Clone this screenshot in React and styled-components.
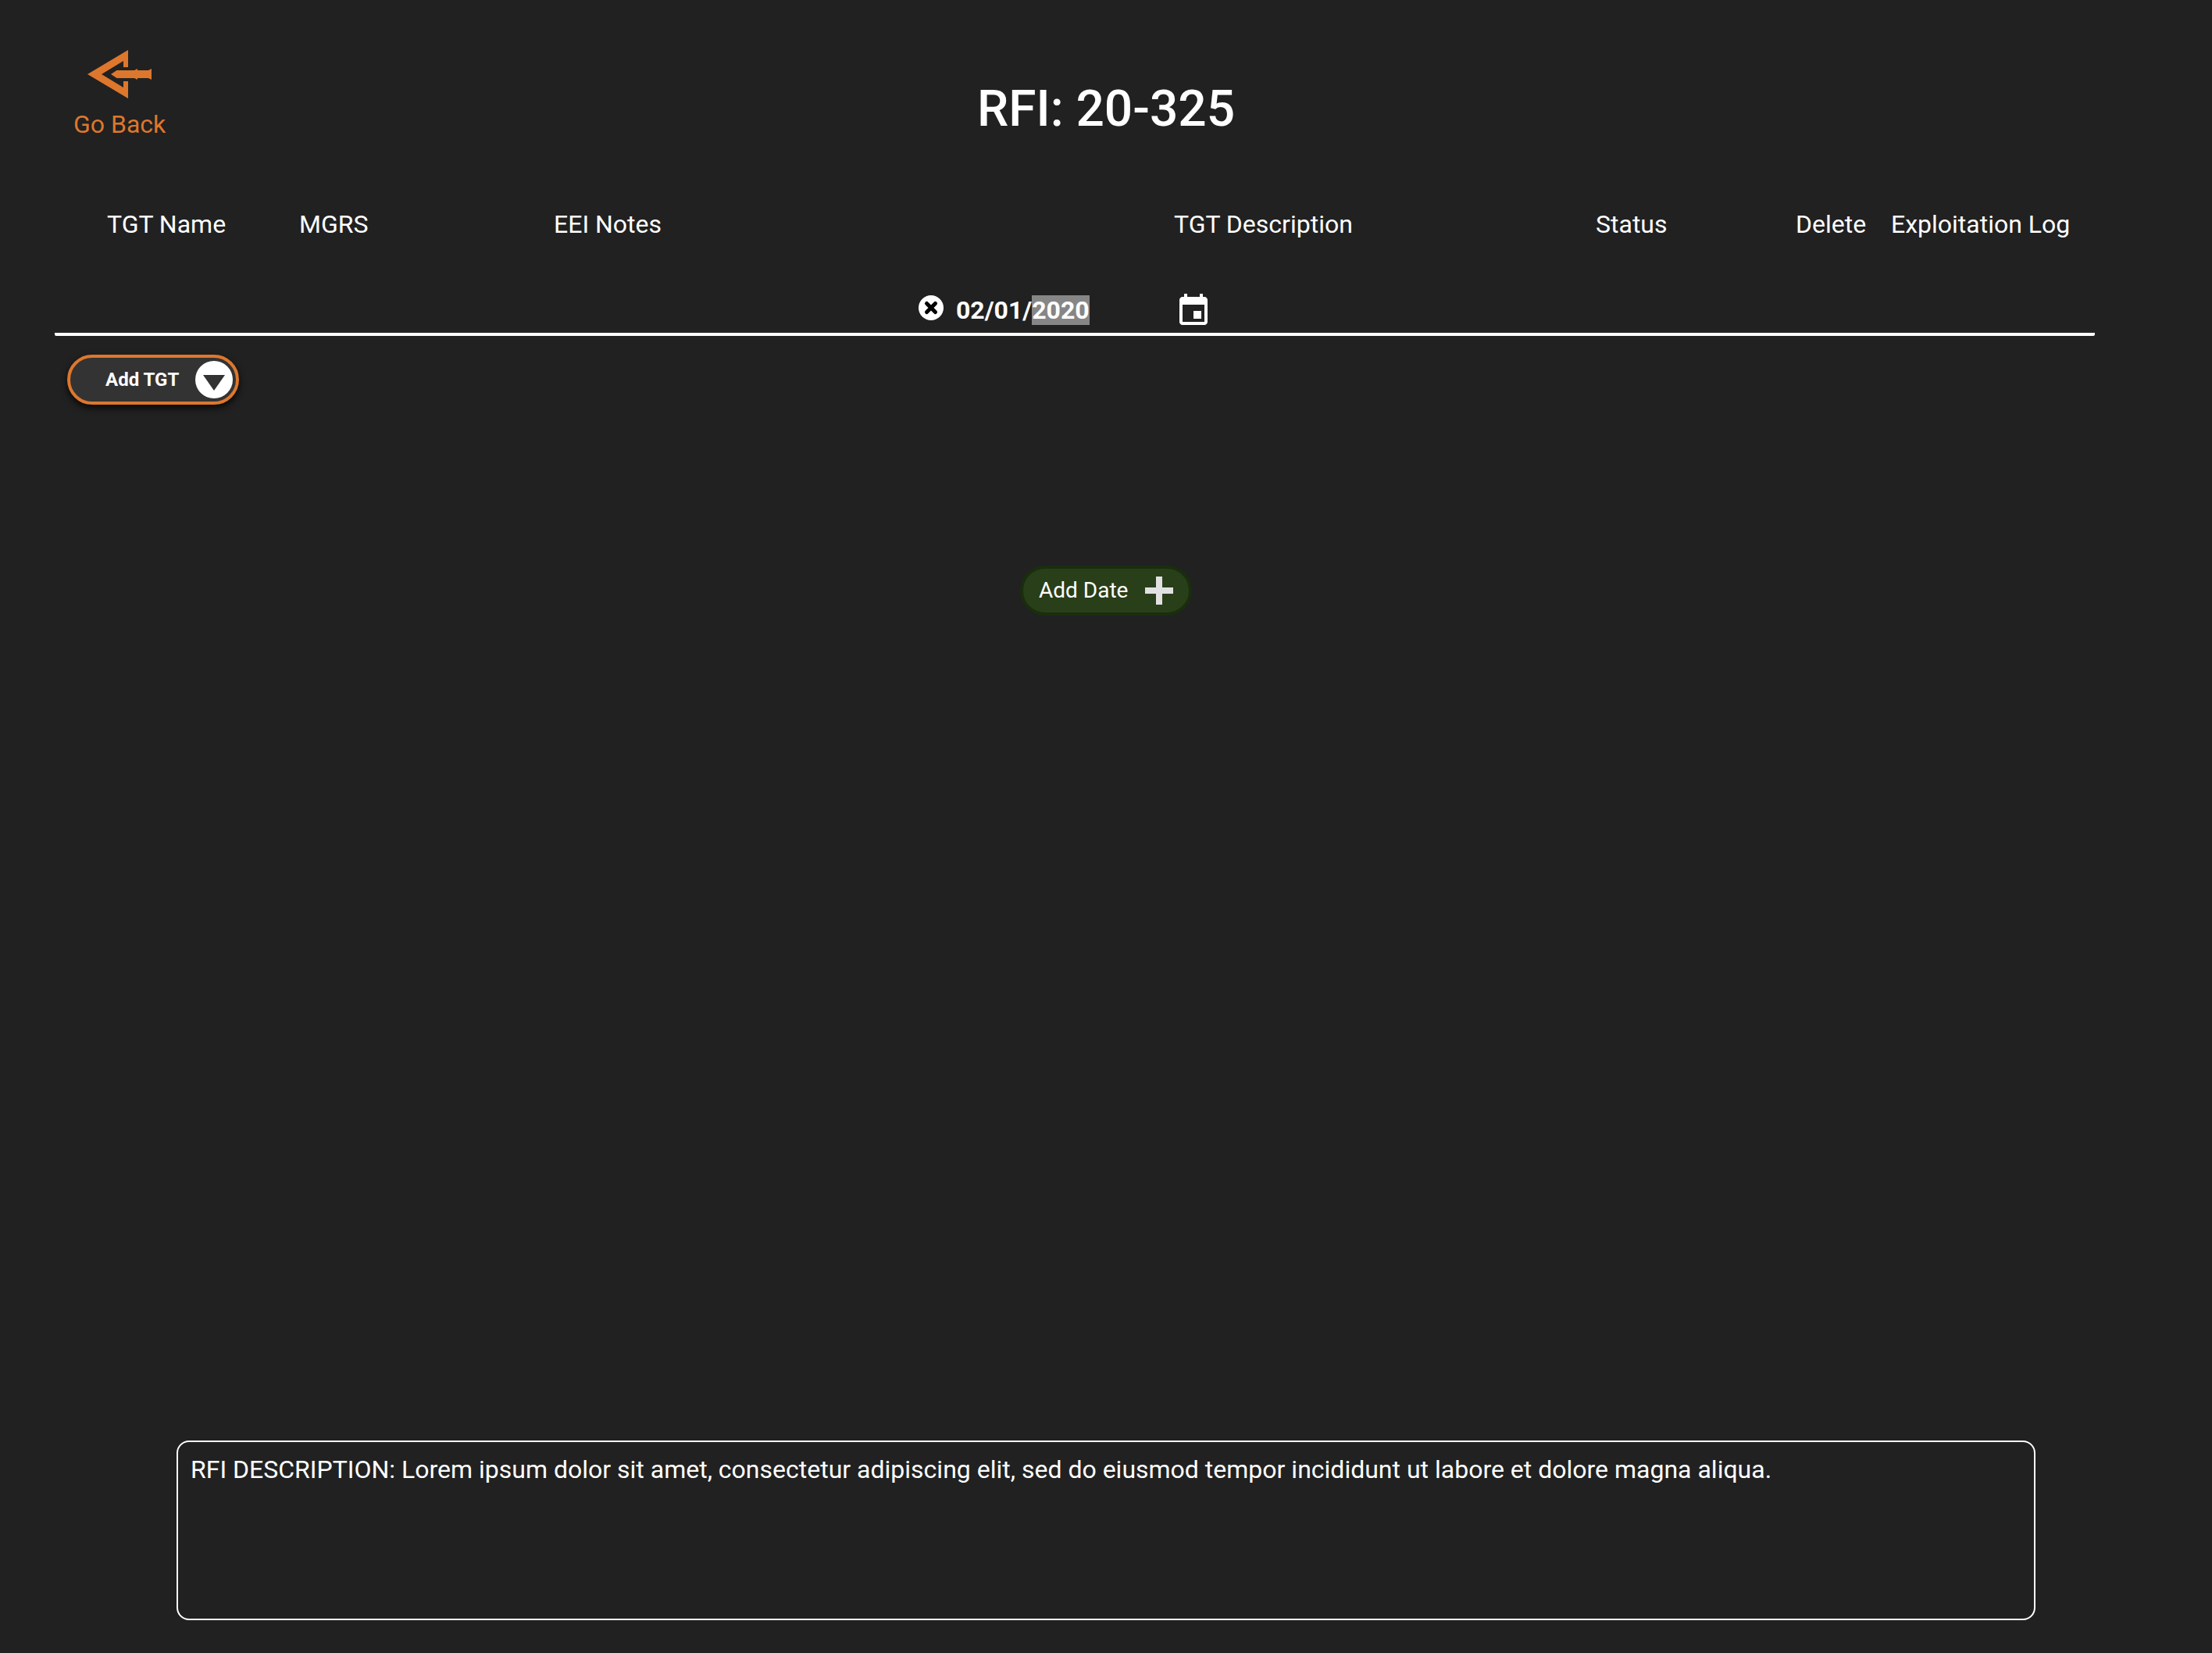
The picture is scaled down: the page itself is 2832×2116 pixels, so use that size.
import React, { useEffect, useRef } from "react";
import styled, { createGlobalStyle } from "styled-components";

const GlobalStyle = createGlobalStyle`
  * { box-sizing: border-box; }
  body {
    margin: 0;
    background: #212121;
    color: #fff;
    font-family: Roboto, "Liberation Sans", sans-serif;
    font-size: 32px;
    line-height: 38px;
  }
  button { font-family: inherit; cursor: pointer; }
`;

const Page = styled.main`
  min-height: 100vh;
  display: flex;
  flex-direction: column;
`;

const Header = styled.header`
  display: grid;
  grid-template-columns: 1fr auto 1fr;
  align-items: end;
  padding: 64px 94px 0;
`;

const BackLink = styled.a`
  justify-self: start;
  display: flex;
  flex-direction: column;
  align-items: center;
  gap: 14px;
  color: #dd772d;
  text-decoration: none;
`;

const Title = styled.h1`
  margin: 0;
  font-size: 64px;
  line-height: 76px;
  font-weight: 500;
`;

const Targets = styled.section`
  margin: 90px 150px 0 70px;
`;

const HeadTable = styled.table`
  display: block;
  width: 100%;
  padding-left: 67px;
`;

const HeadGroup = styled.thead`
  display: block;
`;

const HeadRow = styled.tr`
  display: grid;
  grid-template-columns: 246fr 326fr 794fr 540fr 256fr 122fr 261fr;
`;

const HeadCell = styled.th`
  padding: 0;
  font-weight: 400;
  text-align: left;
  white-space: nowrap;
`;

const DateRow = styled.div`
  display: flex;
  justify-content: center;
  align-items: flex-end;
  padding: 68px 24px 4px 0;
  border-bottom: 4px solid #fff;
  border-radius: 2px;
`;

const DateGroup = styled.div`
  display: flex;
  align-items: flex-start;
  gap: 16px;
  padding-bottom: 6px;
`;

const IconButton = styled.button`
  display: flex;
  padding: 0;
  border: 0;
  background: none;
  color: #fff;
`;

const DateField = styled.input`
  width: 280px;
  height: 38px;
  margin: 0;
  padding: 0;
  border: 0;
  outline: 0;
  background: none;
  color: #fff;
  font: 700 32px/38px Roboto, "Liberation Sans", sans-serif;
  caret-color: transparent;
  &::selection { background: #868686; color: #fff; }
`;

const Pill = styled.button`
  display: flex;
  align-items: center;
  justify-content: space-between;
  width: 220px;
  height: 64px;
  border-radius: 32px;
  color: #fff;
`;

const AddTarget = styled(Pill)`
  margin: 24px 0 0 16px;
  padding: 0 4px 0 45px;
  border: 4px solid #dd772d;
  background: #333;
  box-shadow: 0 4px 10px rgba(0, 0, 0, 0.8);
  font-size: 24px;
  line-height: 28px;
  font-weight: 700;
`;

const AddDate = styled(Pill)`
  align-self: center;
  margin-top: 206px;
  padding: 0 20px;
  border: 4px solid #1a2e0d;
  background: #293f1a;
  font-size: 28px;
  line-height: 32px;
`;

const Description = styled.section`
  min-height: 230px;
  margin: auto 226px 42px;
  padding: 16px;
  border: 2px solid #fff;
  border-radius: 16px;
`;

const DescriptionText = styled.p`
  margin: 0;
`;

const columns = [
  "TGT Name",
  "MGRS",
  "EEI Notes",
  "TGT Description",
  "Status",
  "Delete",
  "Exploitation Log",
];

function BackArrow() {
  return (
    <svg width="82" height="62" viewBox="0 0 82 62" fill="currentColor" aria-hidden="true">
      <path d="M0 31 52 0V22H46V14L18 31 46 48V40H52V62Z" />
      <path d="M30 31 37.500 26H60L64 24V26H78L82 24V38L78 36H64V38L60 36H37.500Z" />
    </svg>
  );
}

function ClearIcon() {
  return (
    <svg width="32" height="32" viewBox="0 0 32 32" aria-hidden="true">
      <circle cx="16" cy="16" r="16" fill="#fff" />
      <path d="M10.500 10.500 21.500 21.500M21.500 10.500 10.500 21.500" stroke="#000" strokeWidth="5" strokeLinecap="round" />
    </svg>
  );
}

function CalendarIcon() {
  return (
    <svg width="48" height="48" viewBox="0 0 24 24" fill="currentColor" aria-hidden="true">
      <path d="M17 12h-5v5h5v-5zM16 1v2H8V1H6v2H5c-1.110 0-1.990.9-1.990 2L3 19c0 1.100.89 2 2 2h14c1.100 0 2-.9 2-2V5c0-1.100-.9-2-2-2h-1V1h-2zm3 18H5V8h14v11z" />
    </svg>
  );
}

function DropIcon() {
  return (
    <svg width="48" height="48" viewBox="0 0 48 48" aria-hidden="true">
      <circle cx="24" cy="24" r="24" fill="#fff" />
      <path d="M10 18H38L24 38Z" fill="#333" />
    </svg>
  );
}

function PlusIcon() {
  return (
    <svg width="36" height="36" viewBox="0 0 36 36" aria-hidden="true">
      <path d="M14 0H22V14H36V22H22V36H14V22H0V14H14Z" fill="#e1e1e1" />
    </svg>
  );
}

export default function App() {
  const dateRef = useRef(null);

  // Open with the year part selected, ready to be typed over.
  useEffect(() => {
    dateRef.current.focus({ preventScroll: true });
    dateRef.current.setSelectionRange(6, 10);
  }, []);

  return (
    <Page>
      <GlobalStyle />
      <Header>
        <BackLink href="#back">
          <BackArrow />
          Go Back
        </BackLink>
        <Title>RFI: 20-325</Title>
      </Header>

      <Targets>
        <HeadTable>
          <HeadGroup>
            <HeadRow>
              {columns.map((name) => (
                <HeadCell key={name} scope="col">{name}</HeadCell>
              ))}
            </HeadRow>
          </HeadGroup>
        </HeadTable>
        <DateRow>
          <DateGroup>
            <IconButton type="button" aria-label="Clear date">
              <ClearIcon />
            </IconButton>
            <DateField ref={dateRef} type="text" aria-label="Date" defaultValue="02/01/2020" />
          </DateGroup>
          <IconButton type="button" aria-label="Pick date">
            <CalendarIcon />
          </IconButton>
        </DateRow>
        <AddTarget type="button">
          Add TGT
          <DropIcon />
        </AddTarget>
      </Targets>

      <AddDate type="button">
        Add Date
        <PlusIcon />
      </AddDate>

      <Description>
        <DescriptionText>
          RFI DESCRIPTION: Lorem ipsum dolor sit amet, consectetur adipiscing elit, sed do eiusmod
          tempor incididunt ut labore et dolore magna aliqua.
        </DescriptionText>
      </Description>
    </Page>
  );
}
